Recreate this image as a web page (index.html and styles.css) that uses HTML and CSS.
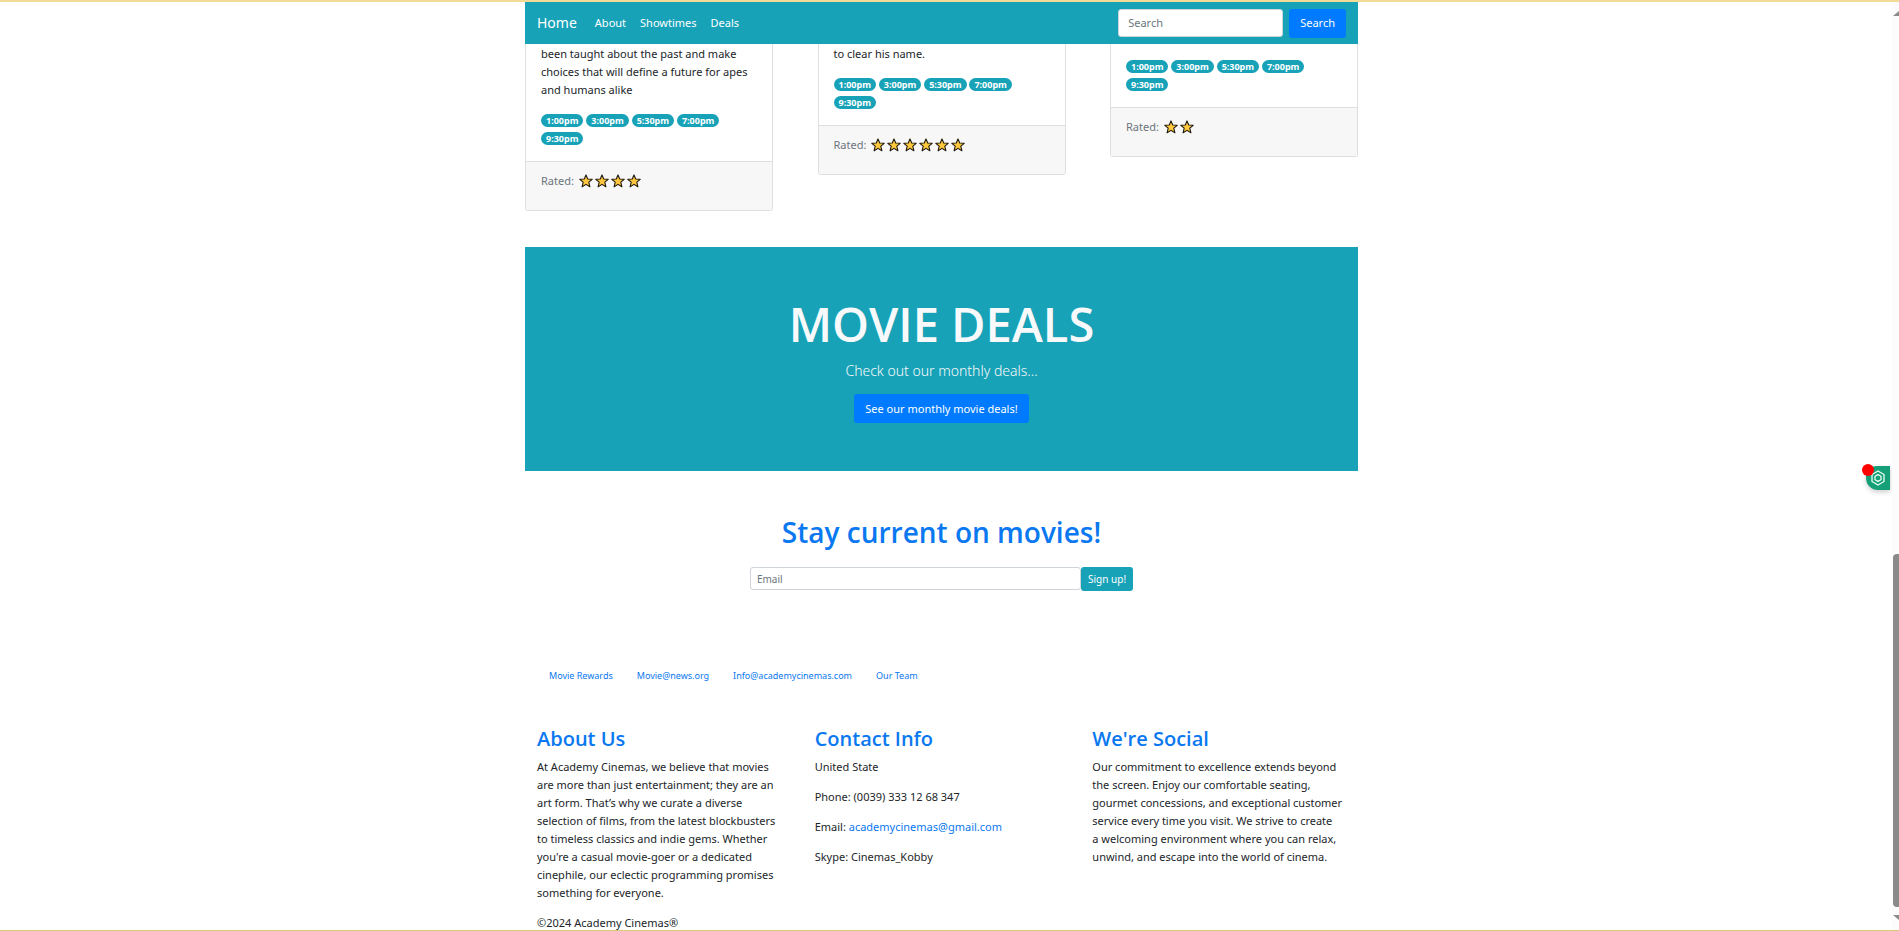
FILE: index.html
```html
<!DOCTYPE html>
<html lang="en">
<head>
<meta charset="utf-8">
<title>Academy Cinemas</title>
<link rel="stylesheet" href="styles.css">
</head>
<body>
<svg class="defs" aria-hidden="true"><symbol id="star" viewBox="0 0 14 14"><path d="M7 .9 8.7 5 13.2 5.3 9.8 8.2 10.9 12.8 7 10.4 3.1 12.8 4.2 8.2 .8 5.3 5.3 5Z" fill="#ffc83d" stroke="#1f1a10" stroke-width="1.1" stroke-linejoin="round"/></symbol></svg>
<div class="page">
  <nav class="navbar">
    <a class="brand" href="#">Home</a>
    <a class="nav-link" href="#about">About</a>
    <a class="nav-link" href="#showtimes">Showtimes</a>
    <a class="nav-link" href="#deals">Deals</a>
    <form class="search">
      <input class="search-input" type="search" placeholder="Search" aria-label="Search">
      <button class="btn btn-primary" type="button">Search</button>
    </form>
  </nav>

  <main>
    <section class="cards" id="showtimes">
      <article class="card">
        <div class="card-body">
          <p>been taught about the past and make<br>choices that will define a future for apes<br>and humans alike</p>
          <div class="times"><span class="badge">1:00pm</span> <span class="badge">3:00pm</span> <span class="badge">5:30pm</span> <span class="badge">7:00pm</span> <span class="badge">9:30pm</span></div>
        </div>
        <div class="card-footer">Rated: <span class="stars" role="img" aria-label="4 stars"><svg><use href="#star"/></svg><svg><use href="#star"/></svg><svg><use href="#star"/></svg><svg><use href="#star"/></svg></span></div>
      </article>
      <article class="card">
        <div class="card-body">
          <p>to clear his name.</p>
          <div class="times"><span class="badge">1:00pm</span> <span class="badge">3:00pm</span> <span class="badge">5:30pm</span> <span class="badge">7:00pm</span> <span class="badge">9:30pm</span></div>
        </div>
        <div class="card-footer">Rated: <span class="stars" role="img" aria-label="6 stars"><svg><use href="#star"/></svg><svg><use href="#star"/></svg><svg><use href="#star"/></svg><svg><use href="#star"/></svg><svg><use href="#star"/></svg><svg><use href="#star"/></svg></span></div>
      </article>
      <article class="card">
        <div class="card-body">
          <p></p>
          <div class="times"><span class="badge">1:00pm</span> <span class="badge">3:00pm</span> <span class="badge">5:30pm</span> <span class="badge">7:00pm</span> <span class="badge">9:30pm</span></div>
        </div>
        <div class="card-footer">Rated: <span class="stars" role="img" aria-label="2 stars"><svg><use href="#star"/></svg><svg><use href="#star"/></svg></span></div>
      </article>
    </section>

    <section class="deals" id="deals">
      <h1>MOVIE DEALS</h1>
      <p>Check out our monthly deals...</p>
      <button class="btn btn-primary" type="button">See our monthly movie deals!</button>
    </section>

    <section class="signup">
      <h2>Stay current on movies!</h2>
      <form class="signup-form">
        <input class="email" type="email" placeholder="Email" aria-label="Email">
        <button class="btn-signup" type="button">Sign up!</button>
      </form>
    </section>
  </main>

  <footer>
    <nav class="links">
      <a href="#">Movie Rewards</a>
      <a href="#">Movie@news.org</a>
      <a href="#">Info@academycinemas.com</a>
      <a href="#">Our Team</a>
    </nav>
    <div class="columns">
      <section id="about">
        <h3>About Us</h3>
        <p>At Academy Cinemas, we believe that movies<br>are more than just entertainment; they are an<br>art form. That’s why we curate a diverse<br>selection of films, from the latest blockbusters<br>to timeless classics and indie gems. Whether<br>you're a casual movie-goer or a dedicated<br>cinephile, our eclectic programming promises<br>something for everyone.</p>
        <p>©2024 Academy Cinemas®</p>
      </section>
      <section>
        <h3>Contact Info</h3>
        <p>United State</p>
        <p>Phone: (0039) 333 12 68 347</p>
        <p>Email: <a href="mailto:academycinemas@gmail.com">academycinemas@gmail.com</a></p>
        <p>Skype: Cinemas_Kobby</p>
      </section>
      <section>
        <h3>We're Social</h3>
        <p>Our commitment to excellence extends beyond<br>the screen. Enjoy our comfortable seating,<br>gourmet concessions, and exceptional customer<br>service every time you visit. We strive to create<br>a welcoming environment where you can relax,<br>unwind, and escape into the world of cinema.</p>
      </section>
    </div>
  </footer>
</div>

<button class="widget" type="button" aria-label="Open assistant">
  <svg viewBox="0 0 16 16" fill="none" stroke="#e8fff5" stroke-width="1.3"><path d="M8 1 14 4.5V11.5L8 15 2 11.5V4.5Z"/><path d="M8 4.6 11 6.3V9.7L8 11.4 5 9.7V6.3Z"/></svg>
  <span class="dot"></span>
</button>
<div class="scrollbar" aria-hidden="true"><i class="arrow up"></i><i class="thumb"></i><i class="arrow down"></i></div>
</body>
</html>
```
FILE: styles.css
```css
* { box-sizing: border-box; }

body {
  margin: 0;
  min-height: 100vh;
  padding-right: 16px;
  overflow: hidden;
  border-top: 2px solid #f0dc96;
  background: #fff;
  color: #212529;
  font: 11px/18px "Noto Sans", "Open Sans", sans-serif;
}

body::after {
  content: "";
  position: fixed;
  inset: auto 0 0;
  height: 1px;
  background: #d8c878;
}

.defs { position: absolute; width: 0; height: 0; }

a { color: #0a78f0; text-decoration: none; }
h1, h2, h3, p { margin: 0; }
h1, h2, h3 { font-family: "Open Sans", "Noto Sans", sans-serif; font-weight: 600; }
input, button { font: inherit; }

.page { max-width: 833px; margin: 0 auto; }

.navbar {
  display: flex;
  align-items: center;
  height: 42px;
  padding: 0 12px;
  background: #17a2b8;
}
.navbar a { color: #fff; }
.brand { margin-right: 11px; font-size: 14px; }
.nav-link { padding: 0 7px; }
.search { display: flex; gap: 6px; margin-left: auto; }
.search-input {
  width: 165px;
  height: 28px;
  padding: 0 9px;
  border: 1px solid #ced4da;
  border-radius: 3px;
}
::placeholder { color: #6c757d; opacity: 1; }

.btn {
  height: 29px;
  padding: 0 11px;
  border: 0;
  border-radius: 3px;
  background: #007bff;
  color: #fff;
}

.cards {
  display: flex;
  justify-content: space-between;
  align-items: flex-start;
}
.card {
  width: 248px;
  border: 1px solid #dfdfdf;
  border-top: 0;
  border-radius: 0 0 3px 3px;
}
.card-body { padding: 1px 15px 15px; }
.card p { margin-bottom: 11px; white-space: nowrap; }
.badge {
  display: inline-block;
  padding: 2px 5px;
  border-radius: 8px;
  background: #17a2b8;
  color: #fff;
  font-size: 9px;
  font-weight: 700;
  line-height: 9px;
  vertical-align: middle;
}
.card-footer {
  padding: 10px 15px 20px;
  border-top: 1px solid #dfdfdf;
  background: #f7f7f7;
  color: #6c757d;
}
.stars { display: inline-flex; gap: 2px; margin-left: 2px; vertical-align: text-bottom; }
.stars svg { width: 14px; height: 14px; }

.deals {
  margin-top: 36px;
  padding: 48px 24px;
  background: #17a2b8;
  color: #f8f9fa;
  text-align: center;
}
.deals h1 { margin-bottom: 7px; font-size: 47px; line-height: 58px; }
.deals p { margin-bottom: 12px; font-size: 14px; font-weight: 300; line-height: 22px; }

.signup { padding-top: 43px; text-align: center; }
.signup h2 { margin-bottom: 17px; color: #0a78f0; font-size: 28px; line-height: 36px; }
.signup-form { display: flex; width: 46%; margin: 0 auto; font-size: 10px; }
.email {
  flex: 1;
  min-width: 0;
  height: 23px;
  padding: 0 6px;
  border: 1px solid #ced4da;
  border-radius: 3px;
}
.btn-signup {
  height: 24px;
  padding: 0 7px;
  border: 0;
  border-radius: 3px;
  background: #17a2b8;
  color: #fff;
}

.links { display: flex; gap: 24px; padding: 76px 24px 0; font-size: 9px; }
.columns { display: grid; grid-template-columns: repeat(3, minmax(0, 1fr)); padding-top: 41px; }
.columns section { padding: 0 12px; white-space: nowrap; }
.columns h3 { margin-bottom: 6px; color: #0a78f0; font-size: 20px; line-height: 26px; }
.columns p { margin-bottom: 12px; }

.widget {
  position: fixed;
  top: 466px;
  right: 9px;
  width: 24px;
  height: 24px;
  padding: 4px;
  border: 0;
  border-radius: 10px 0 0 12px;
  background: #15a077;
  box-shadow: 0 2px 5px rgba(0, 0, 0, .2);
}
.widget svg { display: block; width: 16px; height: 16px; }
.dot {
  position: absolute;
  top: -2px;
  left: -4px;
  width: 12px;
  height: 12px;
  border-radius: 50%;
  background: #f00;
}

.scrollbar { position: fixed; inset: 2px 0 1px auto; width: 7px; overflow: hidden; background: #fcfcfc; }
.thumb {
  position: absolute;
  top: 59.5%;
  left: 1px;
  width: 12px;
  height: 38%;
  border-radius: 4px;
  background: #8a8a8a;
}
.arrow { position: absolute; left: 1px; border: 6px solid transparent; }
.up { top: 9px; border-top: 0; border-bottom: 5px solid #8a8a8a; }
.down { bottom: 10px; border-bottom: 0; border-top: 5px solid #8a8a8a; }
```
